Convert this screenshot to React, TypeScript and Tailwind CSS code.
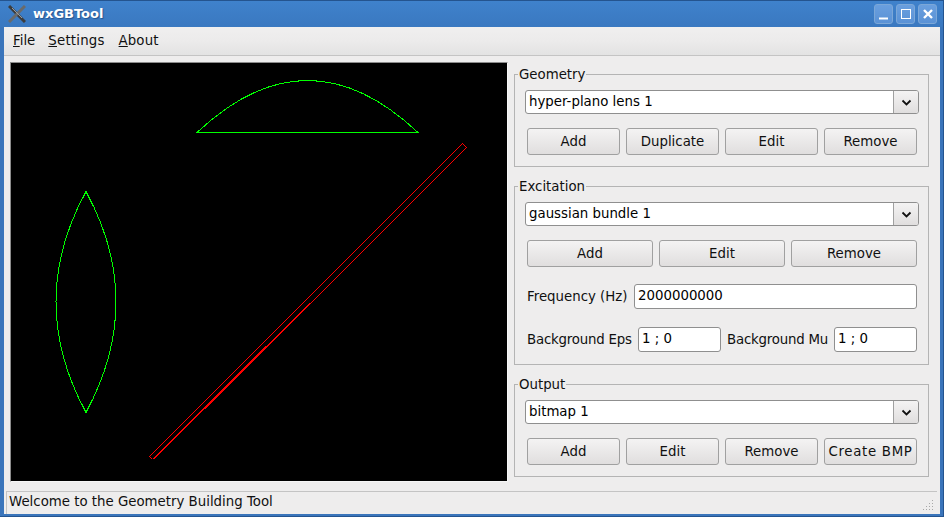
const font = "font-['DejaVu_Sans',sans-serif]";

function Btn({ label, className }: { label: string; className: string }) {
  return (
    <div className={`h-[27px] flex items-center justify-center rounded-[3px] border border-[#a0a0a0] bg-gradient-to-b from-[#f4f3f3] to-[#e0dede] text-[13.33px] text-[#101010] ${className}`}>
      {label}
    </div>
  );
}

function Combo({ value }: { value: string }) {
  return (
    <div className="h-[24px] w-[394px] ml-[10px] flex rounded-[3px] border border-[#8f8f8f] bg-white overflow-hidden">
      <div className="flex-1 pl-[3px] leading-[21px] text-[13.33px] text-black">{value}</div>
      <div className="w-[25px] flex items-center justify-center border-l border-[#a0a0a0] bg-gradient-to-b from-[#f4f3f3] to-[#e0dede]">
        <svg width="11" height="7" viewBox="0 0 11 7">
          <path d="M1.5 1.5 L5.5 5.5 L9.5 1.5" fill="none" stroke="#111" strokeWidth="1.8" />
        </svg>
      </div>
    </div>
  );
}

function Field({ value, className }: { value: string; className: string }) {
  return (
    <div className={`h-[25px] rounded-[3px] border border-[#8f8f8f] bg-white pl-[3px] leading-[22px] text-[13.33px] text-black ${className}`}>
      {value}
    </div>
  );
}

function Group({ title, className, children }: { title: string; className: string; children: React.ReactNode }) {
  return (
    <div className={`relative w-[415px] border border-[#b4b4b4] ${className}`}>
      <span className="absolute left-[3px] top-[-8px] bg-[#eeeded] px-[1px] text-[13.33px] leading-[16px] text-[#101010]">{title}</span>
      {children}
    </div>
  );
}

function Canvas() {
  return (
    <svg width="496" height="418" viewBox="11 63 496 418" className="block bg-black" shapeRendering="crispEdges">
      <g fill="none" stroke="#00ff00">
        <path d="M197 132.5 H418 Q307.5 28.5 197 132.5 Z" />
        <path d="M86 191.5 Q26 301.5 86 412.5 Q146 301.5 86 191.5 Z" />
      </g>
      <path d="M149.5 456.5 L462.5 143.5 L466.5 147.5 L309.5 304.5 M149.5 456.5 L152.5 459.5" fill="none" stroke="#ff0000" />
      {/* lower half is drawn doubled, the reference reads as a solid red line there */}
      <path d="M309.5 303.5 L152.5 459.5 M310.5 303.5 L153.5 459.5" fill="none" stroke="#ff0000" />
    </svg>
  );
}

function Grip() {
  const dots = [[10, 0], [7, 3], [10, 3], [4, 6], [7, 6], [10, 6], [1, 9], [4, 9], [7, 9], [10, 9]];
  return (
    <svg width="12" height="11" viewBox="0 0 12 11" className="ml-auto mr-[3px] mt-[8px]">
      {dots.map(([x, y]) => (
        <rect key={`${x}-${y}`} x={x} y={y} width="1" height="1" fill="#a8a8a8" />
      ))}
    </svg>
  );
}

export default function App() {
  return (
    <div className={`w-[944px] h-[517px] overflow-hidden flex flex-col border-t border-b border-r border-[#24548f] bg-[#3a75bb] ${font}`}>
      <div className="h-[26px] shrink-0 flex items-center bg-gradient-to-b from-[#3f82cc] to-[#3a78c0] pl-[8px] pr-[6px]">
        <svg width="18" height="18" viewBox="0 0 18 18">
          <path d="M1 1 L17 17" stroke="#3c3c3c" strokeWidth="3" />
          <path d="M17 1 L1 17" stroke="#6a6a6a" strokeWidth="3" />
          <path d="M4 3 L14 13" stroke="#9a9a9a" strokeWidth="1" />
        </svg>
        <span className="ml-[7px] text-[13px] font-bold text-white tracking-[0px] [text-shadow:1px_1px_1px_#24548f]">wxGBTool</span>
        <div className="ml-auto flex gap-[3px]">
          {['min', 'max', 'close'].map((k) => (
            <div key={k} className="w-[19px] h-[20px] flex items-center justify-center rounded-[3px] border border-[#7ba7d8] bg-gradient-to-b from-[#6a9fde] to-[#5a92d6]">
              <svg width="12" height="12" viewBox="0 0 12 12">
                {k === 'min' && <path d="M1 10.5 H10" stroke="#fff" strokeWidth="2" />}
                {k === 'max' && <rect x="1.5" y="1.5" width="9" height="9" fill="none" stroke="#fff" />}
                {k === 'close' && <path d="M2 2 L10 10 M10 2 L2 10" stroke="#fff" strokeWidth="2.4" />}
              </svg>
            </div>
          ))}
        </div>
      </div>
      <div className="ml-[4px] mr-[3px] mb-[2px] flex-1 flex flex-col bg-[#eeeded]">
        <div className="h-[29px] shrink-0 flex items-center pl-[9px] border-b border-[#c4c4c4] bg-gradient-to-b from-[#f0efef] via-[#ecebeb] to-[#e3e3e3] text-[13.33px] text-[#101010]">
          <span><u>F</u>ile</span>
          <span className="ml-[13px] tracking-[0.2px]"><u>S</u>ettings</span>
          <span className="ml-[14px] tracking-[0.1px]"><u>A</u>bout</span>
        </div>
        <div className="flex-1 flex pl-[6px] pt-[6px]">
          <div className="w-[498px] h-[420px] border border-t-[#8c8c8c] border-l-[#8c8c8c] border-r-[#f6f6f6] border-b-[#f6f6f6] bg-black">
            <Canvas />
          </div>
          <div className="ml-[6px] flex flex-col pt-[12px]">
            <Group title="Geometry" className="h-[93px] pt-[15px]">
              <Combo value="hyper-plano lens 1" />
              <div className="flex gap-[6px] ml-[12px] mt-[14px]">
                <Btn label="Add" className="w-[93px]" />
                <Btn label="Duplicate" className="w-[93px]" />
                <Btn label="Edit" className="w-[93px]" />
                <Btn label="Remove" className="w-[93px]" />
              </div>
            </Group>
            <Group title="Excitation" className="h-[179px] mt-[19px] pt-[15px]">
              <Combo value="gaussian bundle 1" />
              <div className="flex gap-[6px] ml-[12px] mt-[14px]">
                <Btn label="Add" className="w-[126px]" />
                <Btn label="Edit" className="w-[126px]" />
                <Btn label="Remove" className="w-[126px]" />
              </div>
              <div className="flex items-center mt-[17px] ml-[12px] text-[13.33px] text-[#101010]">
                <span className="w-[107px]">Frequency (Hz)</span>
                <Field value="2000000000" className="w-[283px]" />
              </div>
              <div className="flex items-center mt-[18px] ml-[12px] text-[13.33px] text-[#101010]">
                <span className="w-[111px] tracking-[-0.2px]">Background Eps</span>
                <Field value="1 ; 0" className="w-[83px]" />
                <span className="w-[113px] pl-[6px] tracking-[-0.2px]">Background Mu</span>
                <Field value="1 ; 0" className="w-[83px]" />
              </div>
            </Group>
            <Group title="Output" className="h-[93px] mt-[19px] pt-[15px]">
              <Combo value="bitmap 1" />
              <div className="flex gap-[6px] ml-[12px] mt-[14px]">
                <Btn label="Add" className="w-[93px]" />
                <Btn label="Edit" className="w-[93px]" />
                <Btn label="Remove" className="w-[93px]" />
                <Btn label="Create BMP" className="w-[93px] tracking-[0.7px]" />
              </div>
            </Group>
          </div>
        </div>
        <div className="h-[23px] shrink-0 ml-[2px] mr-[3px] flex border-t border-l border-[#c4c4c4] pl-[2px] text-[13.33px] leading-[20px] text-[#101010]">
          <span>Welcome to the Geometry Building Tool</span>
          <Grip />
        </div>
      </div>
    </div>
  );
}
